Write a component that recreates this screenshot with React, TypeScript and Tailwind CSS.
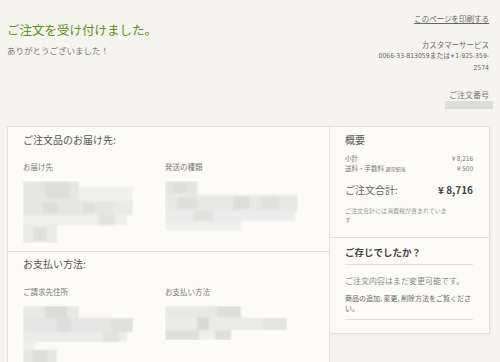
const jp = { fontFamily: '"Noto Sans CJK JP", "Noto Sans", sans-serif' };
const narrow = { fontFamily: '"DejaVu Sans Condensed", "Noto Sans CJK JP", sans-serif' };

type Cell = [number, number, number, number, string];

function Mosaic({ w, h, cells }: { w: number; h: number; cells: Cell[] }) {
  return (
    <svg width={w} height={h} viewBox={`0 0 ${w} ${h}`} className="block">
      <defs>
        <filter id="soft" x="-5%" y="-5%" width="110%" height="110%">
          <feGaussianBlur stdDeviation="0.8" />
        </filter>
      </defs>
      <g filter="url(#soft)">
        {cells.map(([x, y, cw, ch, c], i) => (
          <rect key={i} x={x} y={y} width={cw} height={ch} fill={c} />
        ))}
      </g>
    </svg>
  );
}

const addrCells: Cell[] = [
  [0, 0, 56, 20, '#e6e6e5'],
  [22, 2, 24, 15, '#dcdcdb'],
  [56, 6, 54, 14, '#f0f0ef'],
  [0, 20, 110, 14, '#e5e5e4'],
  [20, 22, 14, 10, '#dbdbda'],
  [60, 22, 12, 10, '#dededd'],
  [90, 20, 20, 14, '#eaeae9'],
  [0, 34, 104, 10, '#eeeeed'],
  [76, 34, 16, 10, '#e2e2e1'],
  [0, 44, 34, 18, '#ebebea'],
  [10, 46, 14, 14, '#e0e0df'],
];

const shipCells: Cell[] = [
  [0, 0, 32, 14, '#e5e5e4'],
  [8, 2, 14, 10, '#dddddc'],
  [0, 14, 133, 16, '#e8e8e7'],
  [12, 16, 20, 12, '#dededd'],
  [68, 16, 16, 12, '#dddddc'],
  [96, 16, 18, 12, '#e0e0df'],
  [0, 30, 130, 10, '#edecec'],
  [28, 30, 20, 10, '#e0e0df'],
  [0, 40, 76, 10, '#efefee'],
];

const billCells: Cell[] = [
  [0, 0, 56, 12, '#e8e8e7'],
  [22, 0, 22, 12, '#dbdbda'],
  [0, 12, 110, 14, '#e5e5e4'],
  [34, 12, 14, 14, '#dededd'],
  [88, 12, 22, 14, '#e0e0df'],
  [0, 26, 104, 10, '#edecec'],
  [80, 26, 16, 10, '#e2e2e1'],
  [0, 36, 12, 18, '#efefee'],
  [0, 44, 34, 14, '#e6e6e5'],
  [10, 44, 14, 14, '#dddddc'],
];

const payCells: Cell[] = [
  [0, 0, 76, 12, '#e8e8e7'],
  [52, 0, 24, 12, '#dededd'],
  [0, 12, 122, 12, '#ebebea'],
  [32, 12, 12, 12, '#d8d8d7'],
  [98, 12, 24, 12, '#e3e3e2'],
  [0, 24, 66, 10, '#dededd'],
  [34, 24, 16, 10, '#eeeeed'],
];

function Section({
  title,
  left,
  right,
  leftCells,
  rightCells,
  rightW,
  rightH,
  className,
  gap,
}: {
  title: string;
  left: string;
  right: string;
  leftCells: Cell[];
  rightCells: Cell[];
  rightW: number;
  rightH: number;
  className: string;
  gap: string;
}) {
  return (
    <div className={className}>
      <div className="text-[10px] leading-[14px] text-[#555]">{title}</div>
      <div className={`grid grid-cols-[142px_1fr] ${gap}`}>
        <div>
          <div className="text-[7.5px] leading-[10px] text-[#777]">{left}</div>
          <div className="mt-[9px]">
            <Mosaic w={110} h={62} cells={leftCells} />
          </div>
        </div>
        <div>
          <div className="text-[7.5px] leading-[10px] text-[#777]">{right}</div>
          <div className="mt-[9px]">
            <Mosaic w={rightW} h={rightH} cells={rightCells} />
          </div>
        </div>
      </div>
    </div>
  );
}

export default function App() {
  return (
    <div className="h-[362px] w-[500px] overflow-hidden bg-[#f6f4ef]" style={jp}>
      <div className="flex justify-between pl-[7px] pr-[11px]">
        <div className="pt-[22px]">
          <h1 className="text-[12.5px] leading-[16px] text-[#5e8f1f]">ご注文を受け付けました。</h1>
          <p className="mt-[6px] text-[8.5px] leading-[12px] text-[#777]">ありがとうございました！</p>
        </div>
        <div className="pt-[14px] text-right">
          <a className="block text-[7.5px] leading-[10px] text-[#666] underline">このページを印刷する</a>
          <div className="mt-[16px] text-[7.5px] leading-[10px] text-[#666]">カスタマーサービス</div>
          <div className="text-[6.8px] leading-[12px] text-[#666]" style={narrow}>
            0066-33-813059または+1-925-359-
            <br />
            2574
          </div>
          <div className="mt-[16px] text-[8px] leading-[10px] text-[#777]">ご注文番号</div>
          <div className="mr-[-4px] mt-[1px] ml-auto h-[8px] w-[48px] bg-[#dcdcdb] blur-[0.6px]" />
        </div>
      </div>

      <div className="ml-[7px] mt-[17px] flex w-[483px] items-start">
        <div className="h-[260px] w-[323px] shrink-0 border border-[#e4e1da] bg-[#fcfbf8] pl-[15px]">
          <Section
            title="ご注文品のお届け先:"
            left="お届け先"
            right="発送の種類"
            leftCells={addrCells}
            rightCells={shipCells}
            rightW={133}
            rightH={50}
            className="-ml-[15px] h-[125px] border-b border-[#e4e1da] pl-[15px] pt-[6px]"
            gap="mt-[15px]"
          />
          <Section
            title="お支払い方法:"
            left="ご請求先住所"
            right="お支払い方法"
            leftCells={billCells}
            rightCells={payCells}
            rightW={122}
            rightH={34}
            className="pt-[5px]"
            gap="mt-[16px]"
          />
        </div>

        <div className="w-[160px] border-y border-r border-[#e4e1da] bg-[#fcfbf8] shadow-[1px_1px_2px_rgba(0,0,0,0.04)]">
          <div className="h-[111px] border-b border-[#e4e1da] pl-[15px] pr-[16px] pt-[7px]">
            <div className="text-[10px] leading-[12px] text-[#555]">概要</div>
            <div className="mt-[7px] flex justify-between text-[6.5px] leading-[10px] text-[#777]">
              <span>小計</span>
              <span>¥ 8,216</span>
            </div>
            <div className="flex justify-between text-[6.5px] leading-[10px] text-[#777]">
              <span>
                送料・手数料 <span className="text-[5px]">通常配送</span>
              </span>
              <span>¥ 500</span>
            </div>
            <div className="mt-[9px] flex justify-between text-[10px] leading-[14px]">
              <span className="text-[#666]">ご注文合計:</span>
              <span className="font-bold text-[#444]">¥ 8,716</span>
            </div>
            <div className="mt-[9px] text-[6px] leading-[9px] text-[#999]">
              ご注文合計には消費税が含まれていま
              <br />す
            </div>
          </div>
          <div className="pl-[15px] pr-[16px] pb-[13px] pt-[8px]">
            <div className="border-b border-[#e4e1da] pb-[6px] text-[9.5px] font-bold leading-[12px] text-[#444]">
              ご存じでしたか？
            </div>
            <div className="mt-[11px] text-[8px] leading-[10px] text-[#888]">ご注文内容はまだ変更可能です。</div>
            <div className="mt-[7px] border-b border-[#e4e1da] pb-[6px] text-[7px] leading-[10px] text-[#666]">
              商品の追加, 変更, 削除方法をご覧くださ
              <br />
              い。
            </div>
          </div>
        </div>
      </div>
    </div>
  );
}
